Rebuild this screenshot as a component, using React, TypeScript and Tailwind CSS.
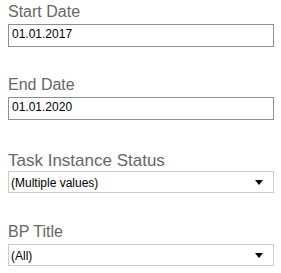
import React from "react";

const Arrow = () => (
  <svg width="8" height="5" viewBox="0 0 8 5" className="block">
    <polygon points="0,0 8,0 4,5" fill="#000" />
  </svg>
);

export default function App() {
  const font = { fontFamily: '"Liberation Sans", Arial, sans-serif' };
  return (
    <div className="w-[281px] h-[273px] bg-white pl-[8px] pr-[7px] pt-[2px]" style={font}>
      <div className="text-[16px] leading-[20px] text-[#666666]">Start Date</div>
      <div className="mt-[2px] h-[23px] border border-[#8e8e8e] pl-[3px] pt-[1px] text-[12px] leading-[16px] text-black">
        01.01.2017
      </div>

      <div className="mt-[28px] text-[16px] leading-[20px] text-[#666666]">End Date</div>
      <div className="mt-[2px] h-[23px] border border-[#8e8e8e] pl-[3px] pt-[1px] text-[12px] leading-[16px] text-black">
        01.01.2020
      </div>

      <div className="mt-[31px] text-[17px] leading-[20px] text-[#666666]">Task Instance Status</div>
      <div className="h-[22px] border border-[#cccccc] pl-[2px] pr-[10px] pt-[1px] text-[12px] leading-[16px] text-black flex items-center justify-between">
        <span>(Multiple values)</span>
        <Arrow />
      </div>

      <div className="mt-[29px] text-[16px] leading-[20px] text-[#666666]">BP Title</div>
      <div className="mt-[2px] h-[22px] border border-[#cccccc] pl-[2px] pr-[10px] pt-[1px] text-[12px] leading-[16px] text-black flex items-center justify-between">
        <span>(All)</span>
        <Arrow />
      </div>
    </div>
  );
}
